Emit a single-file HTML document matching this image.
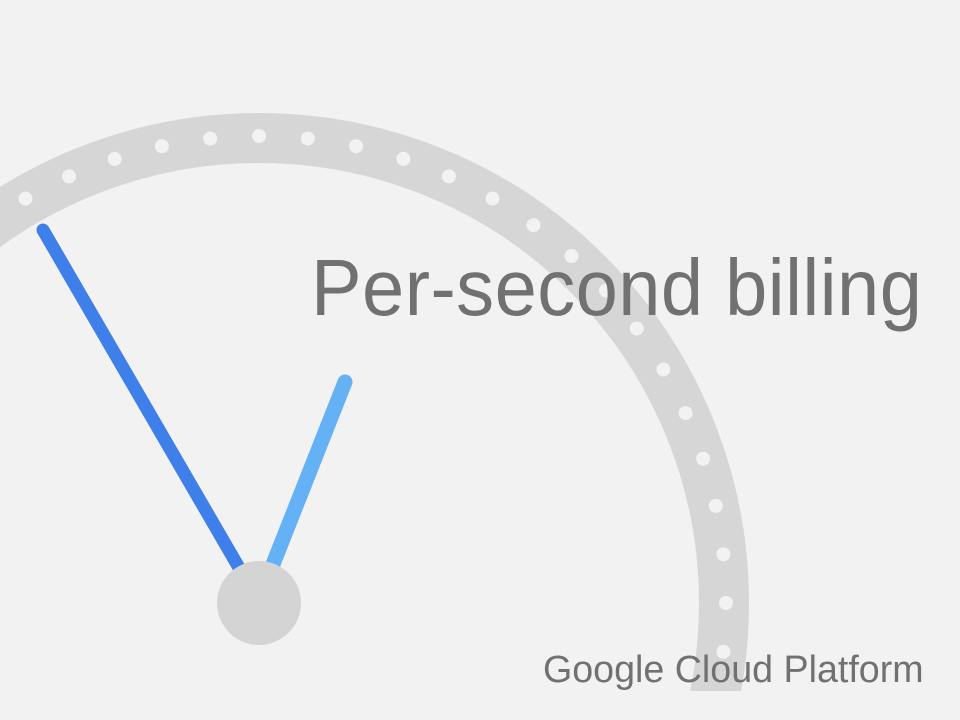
<!DOCTYPE html>
<html><head><meta charset="utf-8"><style>
html,body{margin:0;padding:0;background:#f2f2f2;width:960px;height:720px;overflow:hidden}
svg{position:absolute;left:0;top:0}
.t1{position:absolute;left:311px;top:242px;font:80px "Liberation Sans",sans-serif;color:#717171;white-space:nowrap;letter-spacing:0.5px;transform:scaleX(0.948);transform-origin:0 0}
.t2{position:absolute;left:543px;top:649px;font:38px "Liberation Sans",sans-serif;color:#717171;white-space:nowrap;transform:scaleX(0.99);transform-origin:0 0}
</style></head><body>
<svg width="960" height="720" viewBox="0 0 960 720">
<defs><clipPath id="c"><rect x="0" y="0" width="960" height="691"/></clipPath></defs>
<g clip-path="url(#c)">
<circle cx="259" cy="603" r="465" fill="none" stroke="#d6d6d6" stroke-width="50"/>
<g id="dots" fill="#f2f2f2"></g>
</g>
<line x1="43" y1="230" x2="245" y2="578" stroke="#3f7fea" stroke-width="13" stroke-linecap="round"/>
<line x1="345" y1="382" x2="266" y2="582" stroke="#64b1f5" stroke-width="15" stroke-linecap="round"/>
<circle cx="259" cy="603" r="42" fill="#d4d4d4"/>
</svg>
<script>
var g=document.getElementById('dots'),s='';
for(var i=0;i<60;i++){var a=(-90+i*6)*Math.PI/180;var x=259+467*Math.cos(a),y=603+467*Math.sin(a);s+='<circle cx="'+x.toFixed(1)+'" cy="'+y.toFixed(1)+'" r="7"/>';}
g.innerHTML=s;
</script>
<div class="t1">Per-second billing</div>
<div class="t2">Google Cloud Platform</div>
</body></html>
